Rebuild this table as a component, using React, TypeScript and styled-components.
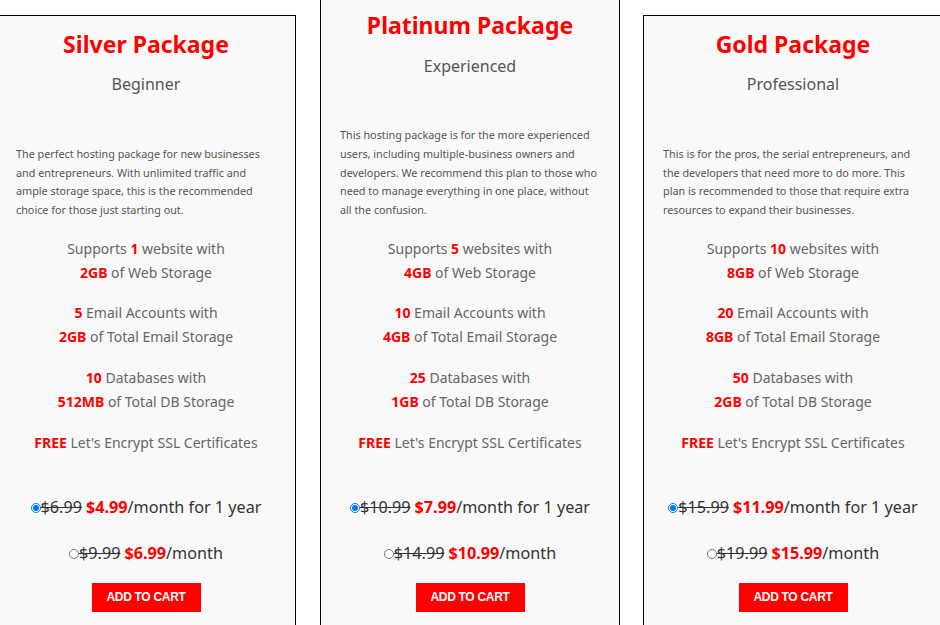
import { useState } from 'react'
import styled, { createGlobalStyle } from 'styled-components'

const GlobalStyle = createGlobalStyle`
  html, body {
    margin: 0;
    padding: 0;
    background: #fff;
    overflow: hidden;
  }
  body {
    font-family: 'Noto Sans', 'Open Sans', sans-serif;
  }
`

const Row = styled.div`
  display: flex;
  align-items: flex-end;
  gap: 24px;
  margin: -4px 0 0 -4px;
`

const Card = styled.div`
  box-sizing: border-box;
  flex: 0 0 300px;
  width: 300px;
  border: 1px solid #000;
  background: #f9f9f9;
  padding: 13px 19px 30px;
  text-align: center;
  &:last-child {
    margin-left: -1px;
  }
`

const Title = styled.h2`
  margin: 0;
  font-size: 23px;
  line-height: 30px;
  font-weight: 700;
  color: #ff0000;
`

const Level = styled.div`
  margin-top: 13.5px;
  font-size: 16px;
  line-height: 24px;
  color: #555;
`

const Blurb = styled.p`
  margin: 48.5px 0 0;
  text-align: left;
  font-size: 10.8px;
  line-height: 18.75px;
  color: #555;
`

const Features = styled.div`
  margin-top: 17px;
  display: flex;
  flex-direction: column;
  gap: 16.6px;
`

const Feature = styled.div`
  font-size: 14px;
  line-height: 24px;
  color: #666;
`

const Hi = styled.b`
  color: #ff0000;
  font-weight: 700;
`

const Prices = styled.div`
  margin-top: 40px;
  display: flex;
  flex-direction: column;
  align-items: center;
  gap: 22px;
`

const PriceRow = styled.label`
  display: flex;
  align-items: center;
  font-size: 16.2px;
  line-height: 24px;
  color: #333;
  cursor: pointer;
`

const Radio = styled.input`
  width: 10px;
  height: 10px;
  margin: 2px 0 0;
`

const Old = styled.s`
  color: #333;
`

const Now = styled.b`
  color: #ff0000;
  margin-left: 4px;
`

const CartButton = styled.button`
  display: block;
  margin: 18px auto 0;
  width: 109px;
  height: 29px;
  border: 0;
  background: #ff0000;
  color: #fff;
  font-family: 'Liberation Sans', Arial, sans-serif;
  font-weight: 700;
  font-size: 12px;
  letter-spacing: -0.3px;
  cursor: pointer;
`

type Plan = {
  name: string
  level: string
  blurb: string
  sites: string
  siteWord: string
  web: string
  emails: string
  mail: string
  dbs: string
  db: string
  yearOld: string
  yearNow: string
  monthOld: string
  monthNow: string
}

const plans: Plan[] = [
  {
    name: 'Silver Package',
    level: 'Beginner',
    blurb:
      'The perfect hosting package for new businesses and entrepreneurs. With unlimited traffic and ample storage space, this is the recommended choice for those just starting out.',
    sites: '1',
    siteWord: 'website',
    web: '2GB',
    emails: '5',
    mail: '2GB',
    dbs: '10',
    db: '512MB',
    yearOld: '$6.99',
    yearNow: '$4.99',
    monthOld: '$9.99',
    monthNow: '$6.99'
  },
  {
    name: 'Platinum Package',
    level: 'Experienced',
    blurb:
      'This hosting package is for the more experienced users, including multiple-business owners and developers. We recommend this plan to those who need to manage everything in one place, without all the confusion.',
    sites: '5',
    siteWord: 'websites',
    web: '4GB',
    emails: '10',
    mail: '4GB',
    dbs: '25',
    db: '1GB',
    yearOld: '$10.99',
    yearNow: '$7.99',
    monthOld: '$14.99',
    monthNow: '$10.99'
  },
  {
    name: 'Gold Package',
    level: 'Professional',
    blurb:
      'This is for the pros, the serial entrepreneurs, and the developers that need more to do more. This plan is recommended to those that require extra resources to expand their businesses.',
    sites: '10',
    siteWord: 'websites',
    web: '8GB',
    emails: '20',
    mail: '8GB',
    dbs: '50',
    db: '2GB',
    yearOld: '$15.99',
    yearNow: '$11.99',
    monthOld: '$19.99',
    monthNow: '$15.99'
  }
]

const PlanCard = ({ p }: { p: Plan }) => {
  const [term, setTerm] = useState('year')
  return (
    <Card>
      <Title>{p.name}</Title>
      <Level>{p.level}</Level>
      <Blurb>{p.blurb}</Blurb>
      <Features>
        <Feature>
          Supports <Hi>{p.sites}</Hi> {p.siteWord} with
          <br />
          <Hi>{p.web}</Hi> of Web Storage
        </Feature>
        <Feature>
          <Hi>{p.emails}</Hi> Email Accounts with
          <br />
          <Hi>{p.mail}</Hi> of Total Email Storage
        </Feature>
        <Feature>
          <Hi>{p.dbs}</Hi> Databases with
          <br />
          <Hi>{p.db}</Hi> of Total DB Storage
        </Feature>
        <Feature>
          <Hi>FREE</Hi> Let's Encrypt SSL Certificates
        </Feature>
      </Features>
      <Prices>
        <PriceRow>
          <Radio type='radio' name={p.name} checked={term === 'year'} onChange={() => setTerm('year')} />
          <Old>{p.yearOld}</Old>
          <Now>{p.yearNow}</Now>/month for 1 year
        </PriceRow>
        <PriceRow>
          <Radio type='radio' name={p.name} checked={term === 'month'} onChange={() => setTerm('month')} />
          <Old>{p.monthOld}</Old>
          <Now>{p.monthNow}</Now>/month
        </PriceRow>
      </Prices>
      <CartButton>ADD TO CART</CartButton>
    </Card>
  )
}

export default function App() {
  return (
    <>
      <GlobalStyle />
      <Row>
        {plans.map(p => (
          <PlanCard key={p.name} p={p} />
        ))}
      </Row>
    </>
  )
}
